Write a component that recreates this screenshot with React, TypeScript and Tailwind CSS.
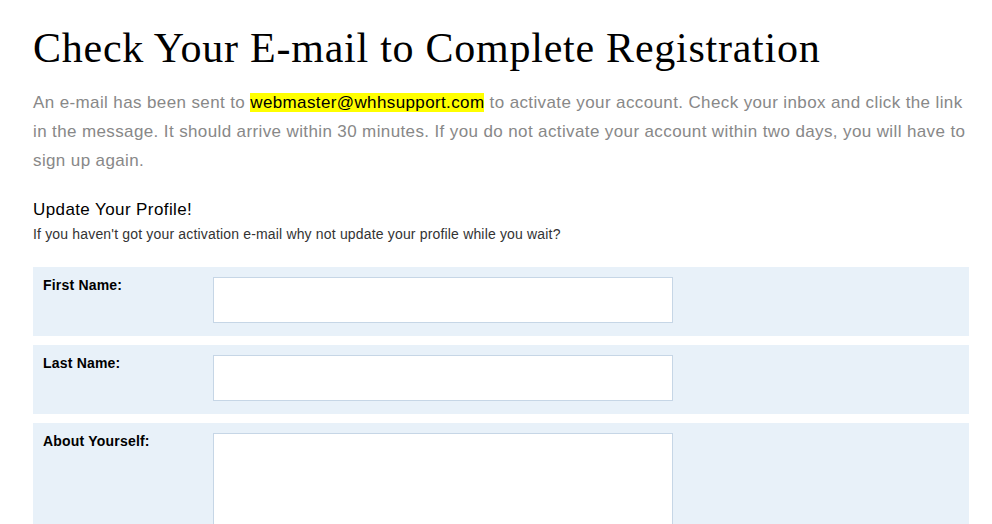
import type { ReactNode } from 'react'

function FieldRow({ label, children, tall }: { label: string; children: ReactNode; tall?: boolean }) {
  return (
    <div className={`flex bg-[#e8f1f9] pl-[10px] pt-[10px] ${tall ? 'pb-[20px]' : 'pb-[13px]'}`}>
      <label className="w-[170px] shrink-0 text-[14px] font-bold leading-[17px] tracking-[0.2px] text-black">
        {label}
      </label>
      {children}
    </div>
  )
}

export default function App() {
  return (
    <div className="min-h-screen bg-white font-['Liberation_Sans',Arial,sans-serif]">
      <div className="mx-[33px] w-[936px] pt-[22px]">
        <h1 className="font-['Liberation_Serif','Times_New_Roman',serif] text-[42px] leading-[52px] tracking-[0.75px] text-black">
          Check Your E-mail to Complete Registration
        </h1>
        <p className="mt-[14px] text-[17px] leading-[29px] tracking-[0.38px] text-[#888888]">
          An e-mail has been sent to{' '}
          <span className="bg-[#ffff00] text-black">webmaster@whhsupport.com</span> to activate your account. Check
          your inbox and click the link in the message. It should arrive within 30 minutes. If you do not activate your
          account within two days, you will have to sign up again.
        </p>
        <h2 className="mt-[25px] text-[17px] leading-[20px] tracking-[0.4px] text-black">Update Your Profile!</h2>
        <p className="mt-[6px] text-[14px] leading-[16px] tracking-[0.17px] text-[#333333]">
          If you haven't got your activation e-mail why not update your profile while you wait?
        </p>
        <form className="mt-[25px] flex flex-col gap-[9px]">
          <FieldRow label="First Name:">
            <input type="text" className="h-[46px] w-[460px] border border-[#c6d6e6] bg-white px-2 outline-none" />
          </FieldRow>
          <FieldRow label="Last Name:">
            <input type="text" className="h-[46px] w-[460px] border border-[#c6d6e6] bg-white px-2 outline-none" />
          </FieldRow>
          <FieldRow label="About Yourself:" tall>
            <textarea className="h-[160px] w-[460px] resize-none border border-[#c6d6e6] bg-white px-2 outline-none" />
          </FieldRow>
        </form>
      </div>
    </div>
  )
}
